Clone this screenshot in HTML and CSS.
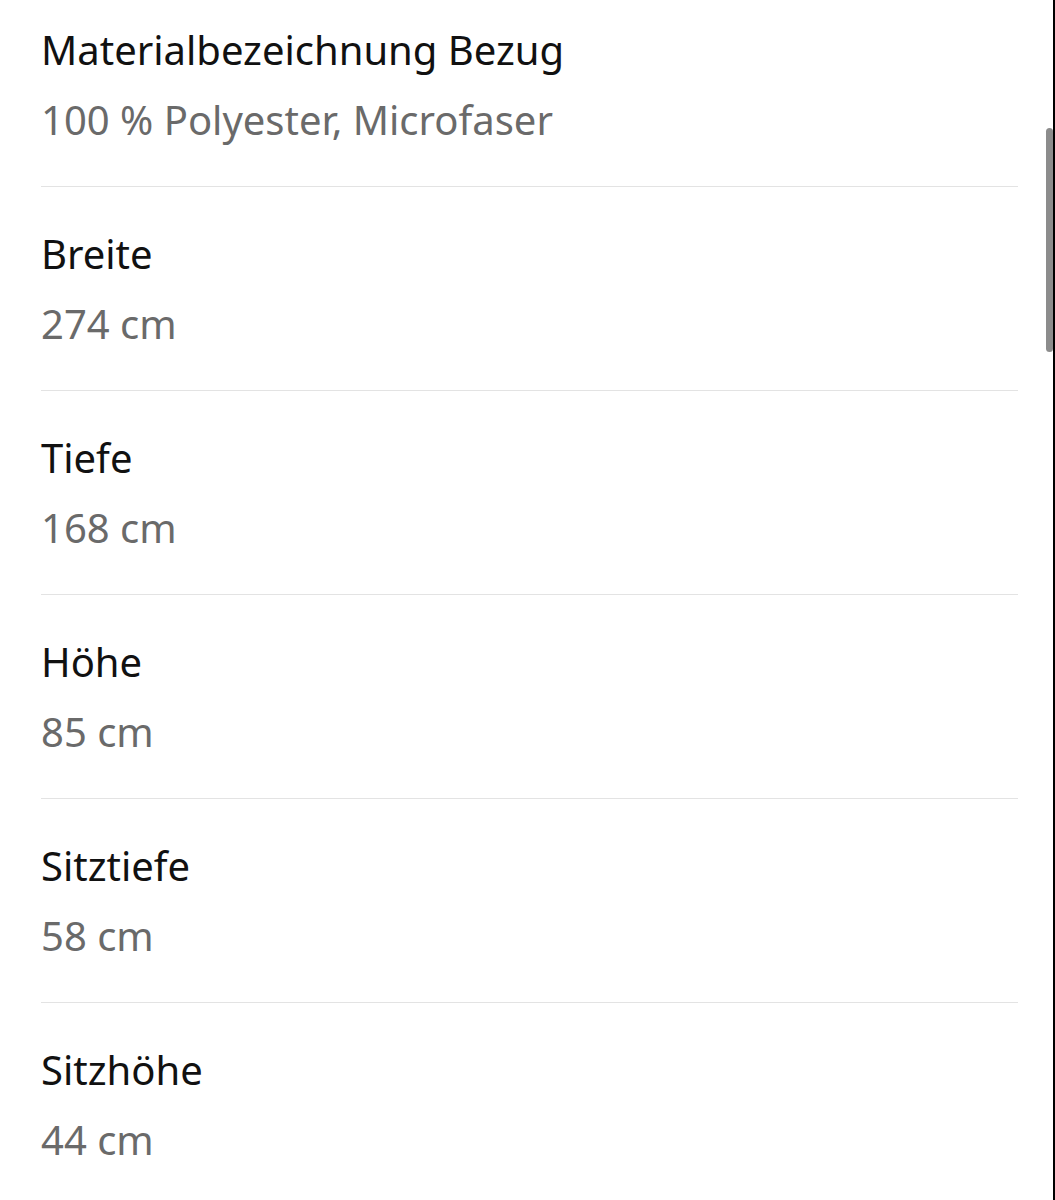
FILE: index.html
```html
<!DOCTYPE html>
<html lang="de">
<head>
  <meta charset="UTF-8" />
  <meta name="viewport" content="width=device-width, initial-scale=1.0"/>
  <title>Produktdetails</title>
  <link rel="stylesheet" href="styles.css">
</head>
<body>

  <div class="screen">
    <div class="details">
      <div class="detail-row">
        <p class="label">Materialbezeichnung Bezug</p>
        <p class="value">100 % Polyester, Microfaser</p>
      </div>
      <div class="detail-row">
        <p class="label">Breite</p>
        <p class="value">274 cm</p>
      </div>
      <div class="detail-row">
        <p class="label">Tiefe</p>
        <p class="value">168 cm</p>
      </div>
      <div class="detail-row">
        <p class="label">Höhe</p>
        <p class="value">85 cm</p>
      </div>
      <div class="detail-row">
        <p class="label">Sitztiefe</p>
        <p class="value">58 cm</p>
      </div>
      <div class="detail-row">
        <p class="label">Sitzhöhe</p>
        <p class="value">44 cm</p>
      </div>
    </div>
    <div class="scroll-thumb"></div>
  </div>

</body>
</html>
```

FILE: styles.css
```css
body {
  margin: 0;
  background-color: #ffffff;
  font-family: 'Noto Sans', 'Open Sans', sans-serif;
}

.screen {
  position: relative;
  height: 1200px;
  overflow: hidden;
  border-right: 2px solid #000000;
  box-sizing: border-box;
}

.details {
  padding: 15px 35px 0 41px;
}

.detail-row {
  padding: 0 0 31px;
  border-bottom: 1px solid #e3e3e3;
  margin-bottom: 32px;
}

.detail-row p {
  margin: 0;
  font-size: 40px;
  line-height: 70px;
}

.label {
  color: #111111;
}

.value {
  color: #6a6a6a;
}

.scroll-thumb {
  position: absolute;
  top: 128px;
  right: 0;
  width: 7px;
  height: 224px;
  border-radius: 4px;
  background-color: #8c8c8c;
}
```
